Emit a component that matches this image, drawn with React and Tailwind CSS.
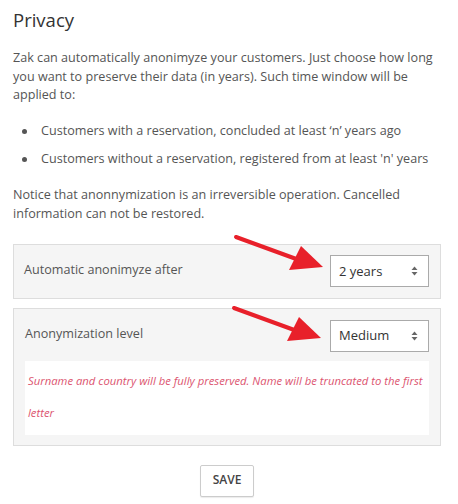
function Arrow({ className }) {
  return (
    <svg className={className} width="96" height="40" viewBox="0 0 96 40" fill="none">
      <line x1="3" y1="3" x2="66" y2="26" stroke="#e8202a" strokeWidth="4" strokeLinecap="round" />
      <polygon points="90,33 56,36 68,12" fill="#e8202a" />
    </svg>
  );
}

function SelectBox({ value }) {
  return (
    <div className="w-[99px] h-[32px] border border-[#aaa] bg-white flex items-center justify-between pl-2 pr-[10px] text-[13px] text-[#333]">
      <span>{value}</span>
      <svg width="7" height="10" viewBox="0 0 7 10">
        <polygon points="3.5,0.5 6.5,4 0.5,4" fill="#666" />
        <polygon points="0.5,6 6.5,6 3.5,9.5" fill="#666" />
      </svg>
    </div>
  );
}

export default function App() {
  return (
    <div className="w-[458px] h-[504px] bg-white pl-[13px] pr-[17px] pt-[2px] text-[#555] text-[12.6px] leading-[18.6px] overflow-hidden" style={{ fontFamily: '"Open Sans", sans-serif' }}>
      <h1 className="text-[18.5px] leading-[36px] text-[#333] font-normal">Privacy</h1>
      <p className="mt-[11px]">
        Zak can automatically anonimyze your customers. Just choose how long you want to preserve their data (in years). Such time window will be applied to:
      </p>
      <ul className="mt-[17px] pl-[9px] flex flex-col gap-[9.5px]">
        <li className="flex items-center gap-[14px]">
          <span className="w-[5px] h-[5px] rounded-full bg-[#555]" />
          <span>Customers with a reservation, concluded at least ‘n’ years ago</span>
        </li>
        <li className="flex items-center gap-[14px]">
          <span className="w-[5px] h-[5px] rounded-full bg-[#555]" />
          <span>Customers without a reservation, registered from at least 'n' years</span>
        </li>
      </ul>
      <p className="mt-[18px]">
        Notice that anonnymization is an irreversible operation. Cancelled information can not be restored.
      </p>

      <div className="relative mt-[20px] h-[55px] bg-[#f5f5f5] border border-[#ddd] flex items-center justify-between pl-[10px] pr-[11px]">
        <span className="-mt-[2px]">Automatic anonimyze after</span>
        <SelectBox value="2 years" />
        <Arrow className="absolute left-[219px] -top-[11px]" />
      </div>

      <div className="relative mt-[9px] bg-[#f5f5f5] border border-[#ddd] px-[11px] pt-[11px] pb-[10px]">
        <div className="flex items-center justify-between">
          <span className="-mt-[2px]">Anonymization level</span>
          <SelectBox value="Medium" />
        </div>
        <div className="mt-[9px] bg-white pl-[3px] pr-[1px] pt-[4px] pb-[6px] text-[11.3px] leading-[32px] italic text-[#dc5570]">
          Surname and country will be fully preserved. Name will be truncated to the first letter
        </div>
        <Arrow className="absolute left-[217px] -top-[4px]" />
      </div>

      <div className="flex justify-center mt-[19px]">
        <button className="h-[32px] px-[12px] border border-[#ccc] bg-white text-[12px] font-semibold text-[#444] rounded-[2px] shadow-[0_1px_1px_rgba(0,0,0,0.08)]">SAVE</button>
      </div>
    </div>
  );
}
